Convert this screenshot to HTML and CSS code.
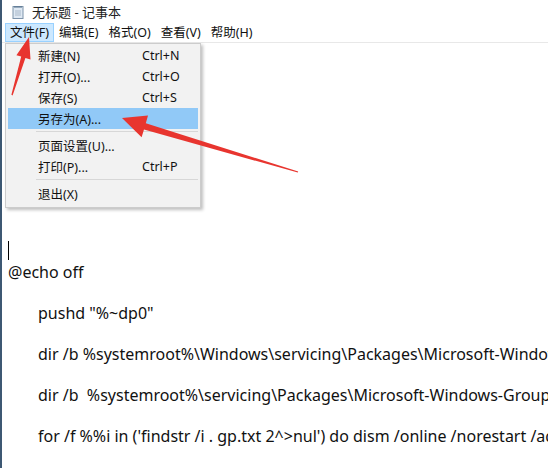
FILE: index.html
```html
<!DOCTYPE html>
<html>
<head>
<meta charset="utf-8">
<title>无标题 - 记事本</title>
<link rel="stylesheet" href="styles.css">
</head>
<body>
<div class="window">
    <div class="titlebar">
        <svg class="app-icon" width="12" height="14" viewBox="0 0 12 14">
            <rect x="1" y="1.5" width="10" height="12" fill="#dfe9f3" stroke="#7d93aa" stroke-width="1"/>
            <path d="M3 1v2M5 1v2M7 1v2M9 1v2" stroke="#4f6a86" stroke-width="1"/>
            <path d="M3 6h6M3 8h6M3 10h6" stroke="#a9b9ca" stroke-width="1"/>
        </svg>
        <span class="title">无标题 - 记事本</span>
    </div>
    <div class="menubar">
        <span class="menu-item active">文件(F)</span>
        <span class="menu-item">编辑(E)</span>
        <span class="menu-item">格式(O)</span>
        <span class="menu-item">查看(V)</span>
        <span class="menu-item">帮助(H)</span>
    </div>
    <div class="editor">
        <p class="caret-line"><span class="caret"></span></p>
        <p>@echo off</p>
        <p class="indent">pushd "%~dp0"</p>
        <p class="indent">dir /b %systemroot%\Windows\servicing\Packages\Microsoft-Windows-GroupPolicy-ClientExtensions-Package~3*.mum &gt;gp.txt</p>
        <p class="indent">dir /b &nbsp;%systemroot%\servicing\Packages\Microsoft-Windows-GroupPolicy-ClientTools-Package~3*.mum &gt;&gt;gp.txt</p>
        <p class="indent">for /f %%i in ('findstr /i . gp.txt 2^&gt;nul') do dism /online /norestart /add-package:"%systemroot%\servicing\Packages\%%i"</p>
        <p class="indent">pause</p>
    </div>

    <ul class="dropdown">
        <li><span>新建(N)</span><span class="key">Ctrl+N</span></li>
        <li><span>打开(O)...</span><span class="key">Ctrl+O</span></li>
        <li><span>保存(S)</span><span class="key">Ctrl+S</span></li>
        <li class="hover"><span>另存为(A)...</span></li>
        <li class="sep"></li>
        <li><span>页面设置(U)...</span></li>
        <li><span>打印(P)...</span><span class="key">Ctrl+P</span></li>
        <li class="sep"></li>
        <li><span>退出(X)</span></li>
    </ul>

    <!-- 标注箭头 -->
    <svg class="arrows" width="548" height="468" viewBox="0 0 548 468">
        <polygon fill="#e8352f" points="29,37 30.5,59.5 25.4,58 12.6,95.4 11.4,94.8 21.2,56.6 16.4,55.2"/>
        <polygon fill="#e8352f" points="122,118 148,115.5 145.8,123.3 298.2,171.6 297.8,172.6 144,129.6 141.6,137.2"/>
    </svg>
</div>
</body>
</html>
```

FILE: styles.css
```css
*{margin:0;padding:0}
html,body{
    width:548px;
    height:468px;
    overflow:hidden;
    background:#fff;
}
.window{
    position:relative;
    width:548px;
    height:468px;
    overflow:hidden;
    border-left:2px solid #3d5873;
    box-sizing:border-box;
    font-family:"Noto Sans","Noto Sans CJK SC",sans-serif;
    color:#111;
}
.titlebar{
    display:flex;
    align-items:center;
    height:23px;
    padding-left:10px;
}
.app-icon{
    margin-right:8px;
}
.title{
    font-size:13px;
    color:#222;
}
.menubar{
    display:flex;
    height:19px;
    padding-left:3px;
    border-bottom:1px solid #e8e8e8;
}
.menu-item{
    padding:0 4px;
    font-size:12.5px;
    line-height:18px;
    border:1px solid transparent;
    color:#111;
}
.menu-item.active{
    background:#cce8ff;
    border-color:#99d1ff;
}
.editor{
    padding:198px 0 0 6px;
    font-size:16px;
    line-height:20.5px;
    white-space:nowrap;
    overflow:hidden;
}
.editor p{
    margin-bottom:20.5px;
}
.editor p.caret-line{
    margin-bottom:0;
    height:20.5px;
}
.caret{
    display:inline-block;
    width:1px;
    height:19px;
    background:#000;
    vertical-align:top;
}
.editor p.indent{
    padding-left:30px;
}
.dropdown{
    position:absolute;
    top:43px;
    left:3px;
    width:190px;
    padding:1px 2px 3px 2px;
    list-style:none;
    background:#f2f2f2;
    border:1px solid #cccccc;
    box-shadow:2px 2px 3px rgba(0,0,0,.25);
    font-size:12.5px;
}
.dropdown li{
    display:flex;
    justify-content:space-between;
    align-items:center;
    height:21px;
    padding:0 16px 0 30px;
    color:#111;
}
.dropdown li .key{
    width:40px;
}
.dropdown li.hover{
    background:#91c9f7;
}
.dropdown li.sep{
    height:6px;
    padding:0;
    margin-left:28px;
    background:linear-gradient(#f2f2f2 2px,#d7d7d7 2px,#d7d7d7 3px,#f2f2f2 3px);
}
.arrows{
    position:absolute;
    top:0;
    left:-2px;
}
```
